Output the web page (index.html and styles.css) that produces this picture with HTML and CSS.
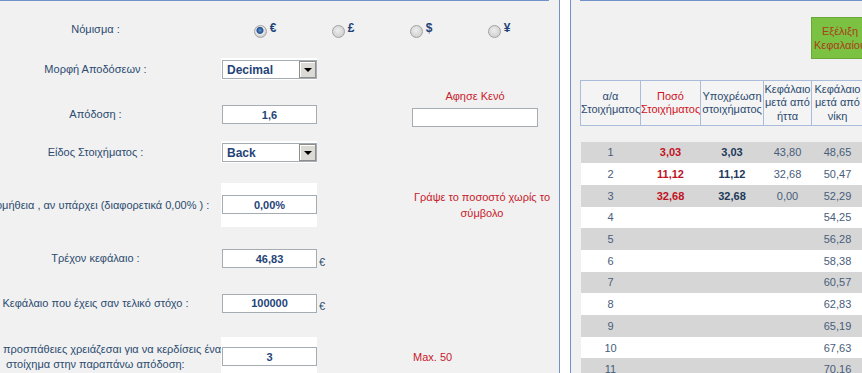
FILE: index.html
```html
<!DOCTYPE html>
<html lang="el">

<head>
    <meta charset="UTF-8">
    <meta name="viewport" content="width=device-width, initial-scale=1.0">
    <title>Κεφάλαιο</title>
    <link rel="stylesheet" href="styles.css">
</head>

<body>
    <div class="page">
        <div class="panel panel-form">
            <div class="cap"></div>

            <div class="row row-currency">
                <div class="label">Νόμισμα :</div>
                <div class="currencies">
                    <label class="radio"><span class="dot checked"></span><span class="sym">€</span></label>
                    <label class="radio"><span class="dot"></span><span class="sym">£</span></label>
                    <label class="radio"><span class="dot"></span><span class="sym">$</span></label>
                    <label class="radio"><span class="dot"></span><span class="sym">¥</span></label>
                </div>
            </div>

            <div class="row row-format">
                <div class="label">Μορφή Αποδόσεων :</div>
                <div class="field field-white field-select">
                    <div class="select"><span>Decimal</span><span class="arrow"></span></div>
                </div>
            </div>

            <div class="row row-odds">
                <div class="label">Απόδοση :</div>
                <div class="field"><input type="text" value="1,6"></div>
                <div></div>
                <div class="note note-empty">
                    <div class="note-text">Αφησε Κενό</div>
                    <input type="text" class="wide" value="">
                </div>
            </div>

            <div class="row row-type">
                <div class="label">Είδος Στοιχήματος :</div>
                <div class="field field-white field-select">
                    <div class="select"><span>Back</span><span class="arrow"></span></div>
                </div>
            </div>

            <div class="row row-fee">
                <div class="label">Προμήθεια , αν υπάρχει (διαφορετικά 0,00% ) :</div>
                <div class="field field-white field-tall"><input type="text" value="0,00%"></div>
                <div></div>
                <div class="note note-text note-wide">Γράψε το ποσοστό χωρίς το<br>σύμβολο</div>
            </div>

            <div class="row row-bank">
                <div class="label">Τρέχον κεφάλαιο :</div>
                <div class="field"><input type="text" value="46,83"></div>
                <div class="unit">€</div>
            </div>

            <div class="row row-target">
                <div class="label">Κεφάλαιο που έχεις σαν τελικό στόχο :</div>
                <div class="field"><input type="text" value="100000"></div>
                <div class="unit">€</div>
            </div>

            <div class="row row-tries">
                <div class="label label-long">προσπάθειες χρειάζεσαι για να κερδίσεις ένα<br>&nbsp;στοίχημα στην παραπάνω απόδοση:</div>
                <div class="field field-white field-mid"><input type="text" value="3"></div>
                <div></div>
                <div class="note note-text note-left">Max. 50</div>
            </div>
        </div>

        <div class="panel panel-table">
            <div class="cap"></div>
            <div class="chart-btn">Εξέλιξη<br>Κεφαλαίου</div>

            <table class="bets">
                <colgroup>
                    <col style="width: 60px">
                    <col style="width: 60px">
                    <col style="width: 63px">
                    <col style="width: 48px">
                    <col style="width: 52px">
                </colgroup>
                <thead>
                    <tr>
                        <th>α/α Στοιχήματος</th>
                        <th class="red">Ποσό Στοιχήματος</th>
                        <th>Υποχρέωση στοιχήματος</th>
                        <th>Κεφάλαιο μετά από ήττα</th>
                        <th>Κεφάλαιο μετά από νίκη</th>
                    </tr>
                </thead>
                <tbody>
                    <tr class="spacer"><td colspan="5"></td></tr>
                    <tr class="grey"><td>1</td><td class="stake">3,03</td><td class="liab">3,03</td><td>43,80</td><td>48,65</td></tr>
                    <tr><td>2</td><td class="stake">11,12</td><td class="liab">11,12</td><td>32,68</td><td>50,47</td></tr>
                    <tr class="grey"><td>3</td><td class="stake">32,68</td><td class="liab">32,68</td><td>0,00</td><td>52,29</td></tr>
                    <tr><td>4</td><td></td><td></td><td></td><td>54,25</td></tr>
                    <tr class="grey"><td>5</td><td></td><td></td><td></td><td>56,28</td></tr>
                    <tr><td>6</td><td></td><td></td><td></td><td>58,38</td></tr>
                    <tr class="grey"><td>7</td><td></td><td></td><td></td><td>60,57</td></tr>
                    <tr><td>8</td><td></td><td></td><td></td><td>62,83</td></tr>
                    <tr class="grey"><td>9</td><td></td><td></td><td></td><td>65,19</td></tr>
                    <tr><td>10</td><td></td><td></td><td></td><td>67,63</td></tr>
                    <tr class="grey"><td>11</td><td></td><td></td><td></td><td>70,16</td></tr>
                </tbody>
            </table>
        </div>
    </div>
</body>
</html>
```

FILE: styles.css
```css
* {
    box-sizing: border-box;
}

body {
    margin: 0;
    background-color: #fff;
    font-family: "Liberation Sans", Arial, sans-serif;
    font-size: 11px;
    color: #2b4b70;
    overflow: hidden;
}

.page {
    display: flex;
    gap: 10px;
    height: 373px;
}

.panel {
    background-color: #f1f1f1;
    height: 100%;
}

.panel-form {
    flex: 0 0 591px;
    margin-left: -31px;
    border-left: 1px solid #7092c8;
    border-right: 1px solid #7092c8;
}

.panel-table {
    flex: 0 0 340px;
    border-left: 1px solid #7092c8;
    padding-left: 9px;
}

.cap {
    height: 0;
    border: 1px solid #7092c8;
    border-top: none;
    border-radius: 0 0 4px 4px;
}

.panel-form .cap {
    margin: 0 10px 0 9px;
}

/* form rows */
.row {
    display: grid;
    grid-template-columns: 251px 96px 95px 138px;
    align-items: center;
}

.row-currency { margin-top: 8px; height: 40px; }
.row-format { height: 40px; }
.row-odds { height: 45px; }
.row-type { height: 36px; }
.row-fee { height: 70px; }
.row-bank { height: 37px; }
.row-target { height: 52px; }
.row-tries { height: 55px; }

.label {
    text-align: center;
    line-height: 15px;
    white-space: nowrap;
}

.label-long {
    text-align: left;
    padding-left: 33px;
}

.currencies {
    grid-column: 2 / 5;
    display: grid;
    grid-template-columns: repeat(4, 78px);
    justify-items: center;
    padding-left: 5px;
}

.radio {
    display: flex;
    align-items: flex-start;
    gap: 3px;
}

.dot {
    width: 13px;
    height: 13px;
    margin-top: 4px;
    border-radius: 50%;
    border: 1px solid #a2a2a2;
    background: radial-gradient(circle at 45% 40%, #eeeeee, #c6c6c6);
}

.dot.checked {
    background: radial-gradient(circle at 45% 40%, #6a9ad2 0, #1f4f8e 3px, #e9e9e9 4px, #d2d2d2 6px);
}

.sym {
    font-weight: bold;
    font-size: 12px;
    color: #1f4478;
    line-height: 14px;
}

.field {
    height: 21px;
    padding: 1px;
}

.field-white { background-color: #fff; }
.field-select { height: 22px; padding: 2px 1px; }
.field-tall { height: 44px; padding: 12px 1px; }
.field-mid { height: 39px; align-self: end; margin-bottom: 8px; padding: 10px 1px; }

input {
    display: block;
    width: 95px;
    height: 19px;
    margin: 0;
    padding: 0;
    border: 1px solid #a5acb2;
    background-color: #fff;
    font-family: inherit;
    font-size: 11px;
    font-weight: bold;
    color: #1f4478;
    text-align: center;
    outline: none;
}

input.wide {
    width: 126px;
}

.select {
    display: flex;
    justify-content: space-between;
    align-items: center;
    width: 95px;
    height: 19px;
    border: 1px solid #a5acb2;
    background-color: #fff;
    padding-left: 4px;
    font-weight: bold;
    font-size: 12px;
    color: #1f4478;
}

.arrow {
    position: relative;
    width: 17px;
    height: 17px;
    background-color: #dcdad4;
    border: 1px solid #8d8d8d;
    box-shadow: inset 1px 1px 0 #fff;
}

.arrow::after {
    content: "";
    position: absolute;
    left: 4px;
    top: 6px;
    border-left: 4px solid transparent;
    border-right: 4px solid transparent;
    border-top: 4px solid #000;
}

.unit {
    align-self: center;
    padding: 6px 0 0 2px;
    color: #2b4b70;
}

.note-text {
    color: #c8202b;
    text-align: center;
    line-height: 16px;
}

.note-wide {
    white-space: nowrap;
    padding-left: 2px;
}

.note-empty {
    align-self: end;
    margin-bottom: 13px;
    display: flex;
    flex-direction: column;
    gap: 5px;
}

.note-empty .note-text {
    width: 126px;
    line-height: 14px;
}

.note-left {
    text-align: left;
    padding-left: 1px;
}

/* right side */
.chart-btn {
    margin: 16px 0 0 231px;
    width: 58px;
    height: 42px;
    padding-top: 6px;
    background-color: #7cc242;
    border: 1px solid #6aa83a;
    color: #a8401a;
    text-align: center;
    line-height: 14px;
    white-space: nowrap;
}

.bets {
    margin-top: 21px;
    border-collapse: collapse;
    table-layout: fixed;
    width: 283px;
}

.bets th {
    height: 45px;
    padding: 0;
    border: 1px solid #a9bcdc;
    font-weight: normal;
    line-height: 13.5px;
    color: #2b4b70;
    background-color: #f4f4f4;
}

.bets th.red {
    color: #d0121d;
}

.bets td {
    height: 21.7px;
    padding: 0;
    text-align: center;
    color: #485d7a;
    background-color: #fff;
}

.bets tr.grey td {
    background-color: #d6d6d6;
}

.bets tr.spacer td {
    height: 16px;
    background-color: #f1f1f1;
}

.bets td.stake {
    font-weight: bold;
    color: #c0121f;
}

.bets td.liab {
    font-weight: bold;
    color: #22395a;
}
```
